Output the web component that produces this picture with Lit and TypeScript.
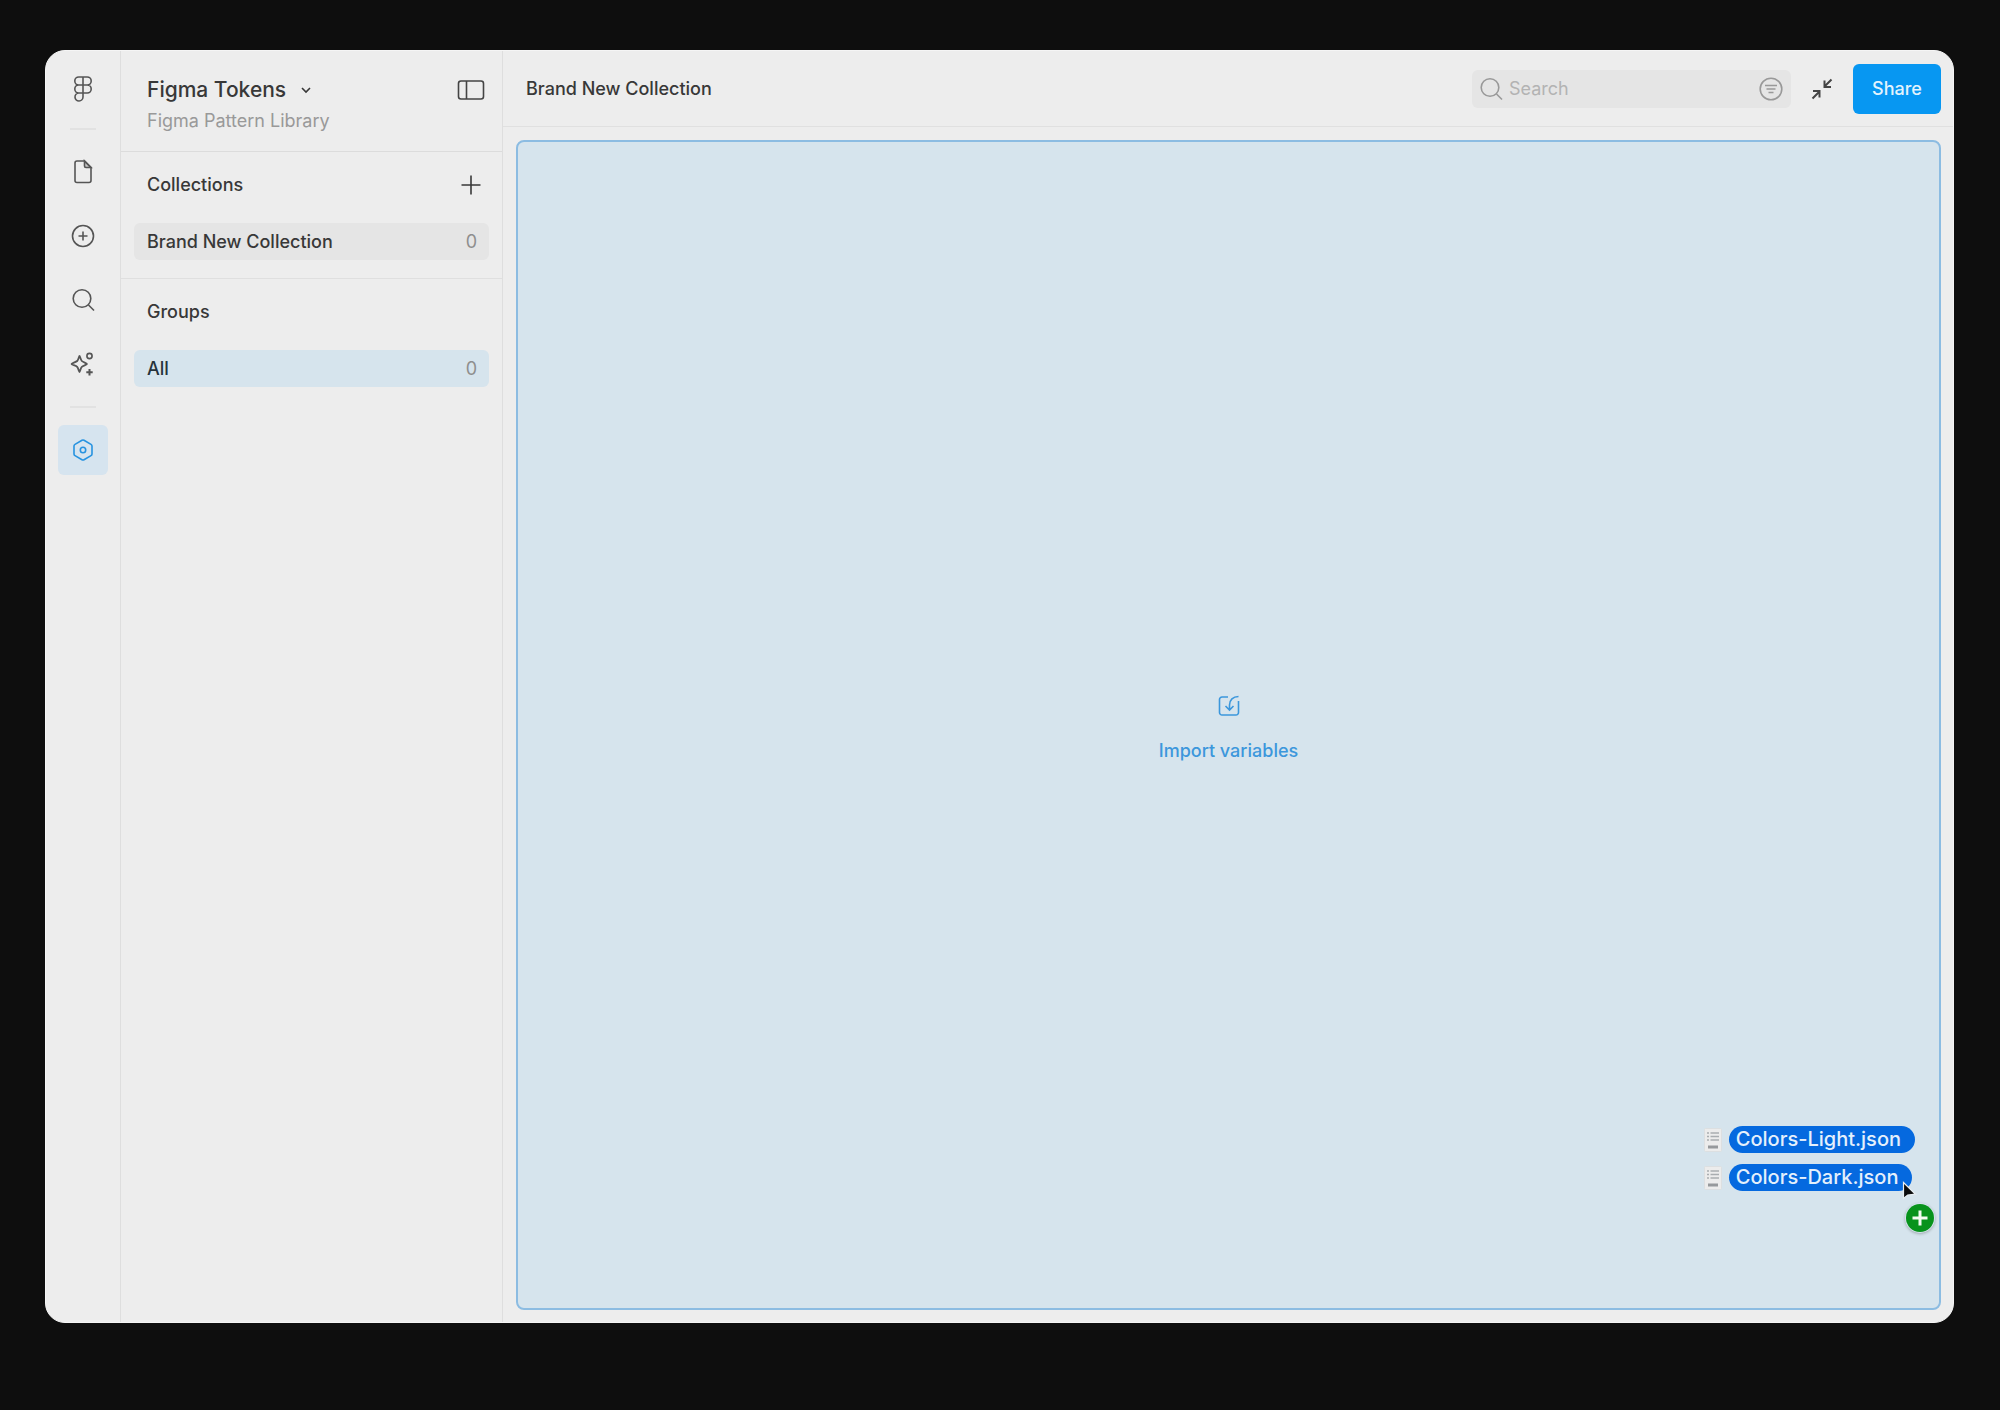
import { LitElement, html, css, svg } from "lit";
import { customElement, state } from "lit/decorators.js";

const icons = {
  figma: svg`<svg width="28" height="28" viewBox="0 0 28 28"><path d="M14 2H9.800a4 4 0 0 0 0 8H14zM14 2h4.200a4 4 0 0 1 0 8H14zM14 10H9.800a4 4 0 0 0 0 8H14zM18.200 10a4 4 0 1 1 0 8H14v-8zM14 18H9.800a4 4 0 1 0 4.200 4z"/></svg>`,
  file: svg`<svg width="28" height="28" viewBox="0 0 28 28"><path d="M8 3h7.500l6.500 6.500V22.500a2 2 0 0 1-2 2H8a2 2 0 0 1-2-2V5a2 2 0 0 1 2-2z"/><path d="M15.500 3v5a1.500 1.500 0 0 0 1.500 1.500h5z" fill="currentColor" fill-opacity=".25"/></svg>`,
  add: svg`<svg width="28" height="28" viewBox="0 0 28 28"><circle cx="14" cy="14" r="10.500"/><path d="M14 9.500v9M9.500 14h9"/></svg>`,
  search: svg`<svg width="28" height="28" viewBox="0 0 28 28"><circle cx="13" cy="12.500" r="8.800"/><path d="M19.500 19l5.500 5.500"/></svg>`,
  sparkle: svg`<svg width="28" height="28" viewBox="0 0 28 28"><path d="M10.500 6c.500 0 1.200 3.800 2.300 5s5.200 2.200 5.200 3-4 1.700-5.200 2.800-1.800 5.200-2.300 5.200-1.200-4-2.300-5.200S2.500 14.700 2.500 14s4.500-1.800 5.700-3S10 6 10.500 6z" stroke-width="1.800" stroke-linejoin="round"/><circle cx="20.500" cy="6" r="2.600"/><path d="M20.500 19v6.500M17.300 22.200h6.400" stroke-width="2"/></svg>`,
  variables: svg`<svg width="28" height="28" viewBox="0 0 28 28"><path d="M13 4.300a2 2 0 0 1 2 0l7 4.100a2 2 0 0 1 1 1.700v7.800a2 2 0 0 1-1 1.700l-7 4.100a2 2 0 0 1-2 0l-7-4.100a2 2 0 0 1-1-1.700v-7.800a2 2 0 0 1 1-1.700z"/><circle cx="14" cy="14" r="2.700"/></svg>`,
  chevron: svg`<svg width="12" height="12" viewBox="0 0 12 12"><path d="M2 4l4 4 4-4"/></svg>`,
  panel: svg`<svg width="28" height="28" viewBox="0 0 28 28"><rect x="1.500" y="5" width="25" height="18" rx="2.500"/><path d="M9.500 5v18"/></svg>`,
  plus: svg`<svg width="20" height="20" viewBox="0 0 20 20"><path d="M10 .500v19M.500 10h19"/></svg>`,
  filter: svg`<svg width="24" height="24" viewBox="0 0 24 24"><circle cx="12" cy="12" r="10.800"/><path d="M6 8.500h12M7.500 12h9M9.500 15.500h5"/></svg>`,
  collapse: svg`<svg width="22" height="22" viewBox="0 0 22 22"><path d="M20.500 1.500l-7 7M13.500 2.500v6.500H20M1.500 20.500l7-7M2 13h6.500v6.500"/></svg>`,
  importing: svg`<svg width="24" height="24" viewBox="0 0 24 24"><path d="M11 3H5a2.500 2.500 0 0 0-2.500 2.500v13A2.500 2.500 0 0 0 5 21h14a2.500 2.500 0 0 0 2.500-2.500V7"/><path d="M21.500 2.500C16 2.500 12.500 6 12.500 11v5M8.500 12l4 4 4-4"/></svg>`,
  json: svg`<svg width="18" height="24" viewBox="0 0 18 24"><rect x=".500" y=".500" width="17" height="23" rx="1" fill="#ececec" stroke="#dcdfe1" stroke-width="1"/><path d="M3 5h2M6.500 5H15M3 8.500h2M6.500 8.500H15M3 12h2M6.500 12H15" stroke="#a9adb0" stroke-width="1.300"/><path d="M4 19h10" stroke="#96999c" stroke-width="3"/></svg>`,
  pointer: svg`<svg width="16" height="20" viewBox="0 0 16 20"><path d="M1.500 1.500v16l4.200-3.500 7.800-.800z" fill="#0c0c0c" stroke="#e8eef2" stroke-width="1.200"/></svg>`,
  badge: svg`<svg width="30" height="30" viewBox="0 0 30 30"><circle cx="15" cy="15" r="14" fill="#07931c" stroke="none"/><path d="M15 7.500v15M7.500 15h15" stroke="#f2fbf2" stroke-width="3"/></svg>`,
};

@customElement("app-root")
export class AppRoot extends LitElement {
  @state() private query = "";

  private collections = [{ name: "Brand New Collection", count: 0 }];
  private groups = [{ name: "All", count: 0 }];
  private files = ["Colors-Light.json", "Colors-Dark.json"];

  static styles = css`
    :host {
      display: flex;
      box-sizing: border-box;
      min-height: 100vh;
      padding: 50px 46px 87px 45px;
      background: #0e0e0e;
      color: #383838;
      font: 450 18px/24px Inter, "Liberation Sans", sans-serif;
    }
    * { box-sizing: border-box; }
    svg { display: block; flex: none; fill: none; stroke: currentColor; stroke-width: 1.6; }
    button, input { font: inherit; color: inherit; border: 0; margin: 0; padding: 0; background: none; }
    h1, h2, p, ul { margin: 0; padding: 0; font: inherit; list-style: none; }
    .window {
      flex: 1;
      display: flex;
      min-width: 0;
      border-radius: 20px;
      overflow: hidden;
      background: #ededed;
      border: 1px solid #f5f5f5;
    }
    .rail {
      flex: none;
      width: 75px;
      border-right: 1px solid #dedede;
      display: flex;
      flex-direction: column;
      align-items: center;
      padding-top: 13px;
      gap: 14px;
      color: #555;
    }
    .tool { width: 50px; height: 50px; display: grid; place-items: center; border-radius: 6px; }
    .tool.active { background: #d6e4ef; color: #2793e0; }
    .rule { width: 26px; height: 2px; background: #e2e2e2; }
    .rule.top { margin-bottom: 3px; }
    .rule.low { margin: 3px 0; }
    .side { flex: none; width: 382px; border-right: 1px solid #dedede; }
    .head { height: 101px; padding: 23px 17px 0 26px; border-bottom: 1px solid #dcdcdc; }
    .line { display: flex; align-items: center; justify-content: space-between; height: 32px; }
    .head .line { color: #444; }
    .file { display: flex; align-items: center; gap: 14px; font-size: 21px; color: #383838; }
    .sub { color: #999; font-weight: 400; margin-top: 3px; }
    .section { padding: 16px 13px 18px; border-bottom: 1px solid #dfdfdf; }
    .section.last { border-bottom: 0; }
    .section .line { padding: 0 8px 0 13px; height: 34px; }
    .row {
      display: flex;
      justify-content: space-between;
      align-items: center;
      width: 100%;
      height: 37px;
      margin-top: 21px;
      padding: 0 12px 0 13px;
      border-radius: 6px;
      background: #e5e5e5;
    }
    .row.active { background: #d6e4ed; color: #26333b; }
    .count { color: #8e8e8e; font-weight: 400; }
    .main { flex: 1; min-width: 0; display: flex; flex-direction: column; }
    .bar {
      height: 76px;
      display: flex;
      align-items: center;
      padding: 0 12px 0 23px;
      border-bottom: 1px solid #e0e0e0;
    }
    .title { flex: 1; }
    .search {
      width: 319px;
      height: 38px;
      display: flex;
      align-items: center;
      gap: 4px;
      padding: 0 8px 0 5px;
      border-radius: 6px;
      background: #e5e5e5;
      color: #999;
    }
    .search input { flex: 1; min-width: 0; font-weight: 400; outline: 0; }
    .search input::placeholder { color: #b3b3b3; opacity: 1; }
    .shrink { margin: 0 20px; color: #444; }
    .shrink svg { stroke-width: 2; }
    .share {
      width: 88px;
      height: 50px;
      border-radius: 6px;
      background: #0797f2;
      color: #e3f3fd;
    }
    .drop {
      position: relative;
      flex: 1;
      margin: 13px 12px 12px 13px;
      padding-top: 7px;
      border: 2px solid #8cbce2;
      border-radius: 8px;
      background: #d6e4ed;
      display: flex;
      flex-direction: column;
      align-items: center;
      justify-content: center;
      gap: 21px;
      color: #3c97dc;
    }
    .drag {
      position: absolute;
      right: 24px;
      bottom: 117px;
      display: grid;
      gap: 11px;
    }
    .item { display: flex; align-items: center; gap: 7px; height: 27px; }
    .name {
      padding: 0 14px 0 7px;
      border-radius: 14px;
      background: #0569df;
      color: #e4f0fc;
      font-size: 20px;
      line-height: 27px;
      font-weight: 500;
    }
    .pointer { position: absolute; right: 21px; bottom: 107px; }
    .badge { position: absolute; right: 4px; bottom: 75px; border-radius: 50%; box-shadow: 0 1px 3px #0004; }
  `;

  private tool(icon: unknown, label: string, active = false) {
    return html`<button class="tool ${active ? "active" : ""}" aria-label=${label}>${icon}</button>`;
  }

  render() {
    return html`
      <div class="window">
        <nav class="rail" aria-label="Tools">
          ${this.tool(icons.figma, "Main menu")}
          <div class="rule top"></div>
          ${this.tool(icons.file, "File")} ${this.tool(icons.add, "Insert")}
          ${this.tool(icons.search, "Find")} ${this.tool(icons.sparkle, "Actions")}
          <div class="rule low"></div>
          ${this.tool(icons.variables, "Variables", true)}
        </nav>
        <aside class="side">
          <header class="head">
            <div class="line">
              <button class="file">Figma Tokens ${icons.chevron}</button>
              <button aria-label="Toggle sidebar">${icons.panel}</button>
            </div>
            <p class="sub">Figma Pattern Library</p>
          </header>
          <section class="section">
            <div class="line">
              <h2>Collections</h2>
              <button aria-label="New collection">${icons.plus}</button>
            </div>
            ${this.collections.map(
              (c) => html`<button class="row"><span>${c.name}</span><span class="count">${c.count}</span></button>`
            )}
          </section>
          <section class="section last">
            <div class="line"><h2>Groups</h2></div>
            ${this.groups.map(
              (g) => html`<button class="row active"><span>${g.name}</span><span class="count">${g.count}</span></button>`
            )}
          </section>
        </aside>
        <main class="main">
          <header class="bar">
            <h1 class="title">Brand New Collection</h1>
            <div class="search">
              ${icons.search}
              <input
                type="search"
                aria-label="Search"
                placeholder="Search"
                .value=${this.query}
                @input=${(e: Event) => (this.query = (e.target as HTMLInputElement).value)}
              />
              <button aria-label="Filter">${icons.filter}</button>
            </div>
            <button class="shrink" aria-label="Collapse">${icons.collapse}</button>
            <button class="share">Share</button>
          </header>
          <div class="drop">
            ${icons.importing}
            <p>Import variables</p>
            <ul class="drag">
              ${this.files.map((f) => html`<li class="item">${icons.json}<span class="name">${f}</span></li>`)}
            </ul>
            <div class="pointer">${icons.pointer}</div>
            <div class="badge">${icons.badge}</div>
          </div>
        </main>
      </div>
    `;
  }
}
